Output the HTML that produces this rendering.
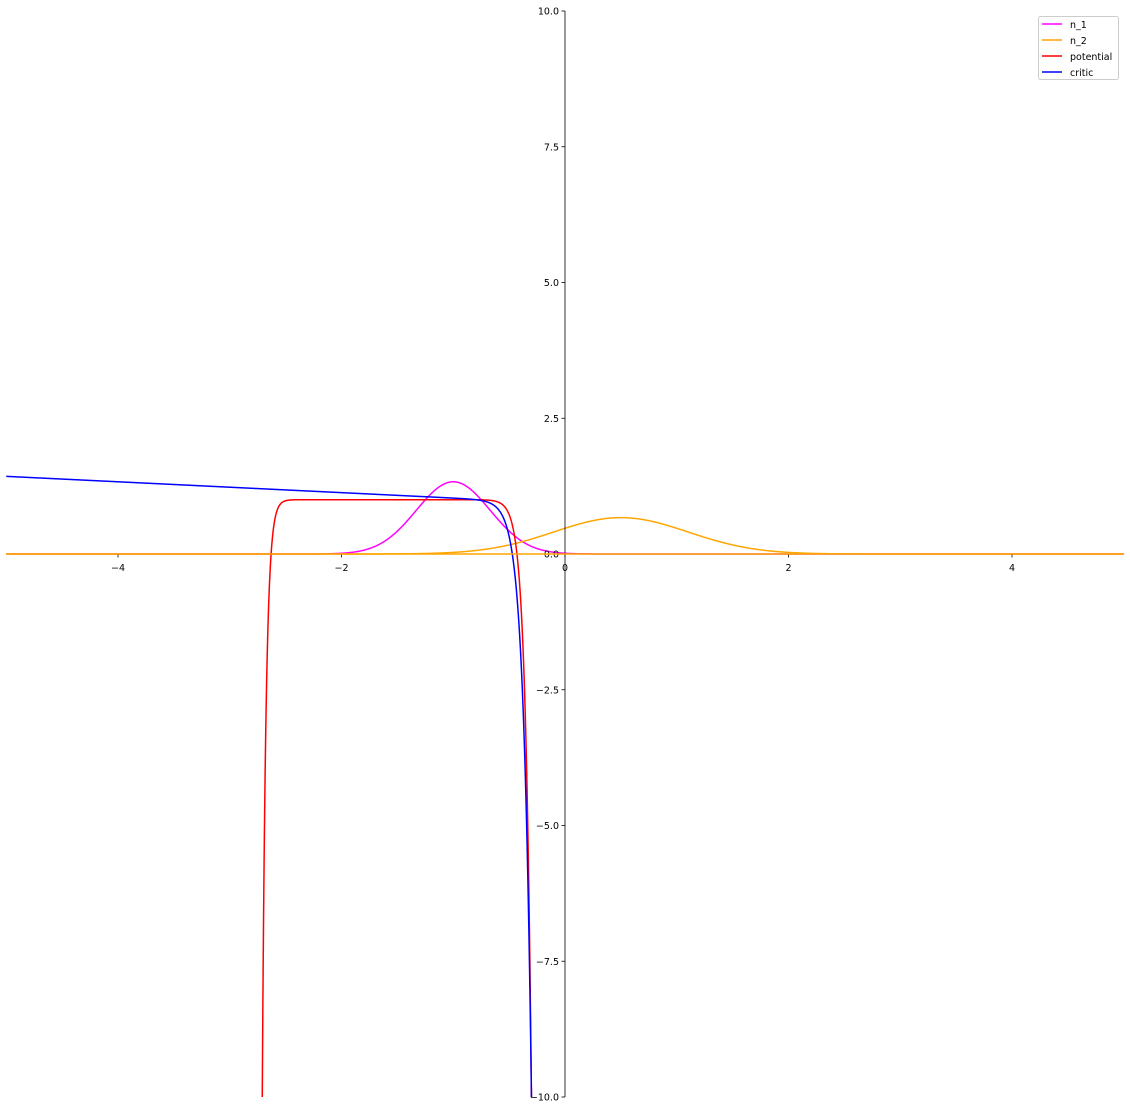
<!DOCTYPE html>
<html><head><meta charset="utf-8">
<style>
html,body{margin:0;padding:0;background:#fff;}
svg{display:block;}
text{font-family:"DejaVu Sans","Liberation Sans",sans-serif;font-size:9.5px;fill:#000;}
</style></head>
<body>
<svg id="s" width="1130" height="1111" viewBox="0 0 1130 1111" xmlns="http://www.w3.org/2000/svg">
<defs><clipPath id="cp"><rect x="6" y="11" width="1118" height="1086"/></clipPath></defs>
<g id="curves" fill="none" stroke-width="1.5" clip-path="url(#cp)"></g>
<line x1="6" y1="554" x2="1124" y2="554" stroke="#000" stroke-width="0.8"/>
<line x1="565" y1="11" x2="565" y2="1097" stroke="#000" stroke-width="0.8"/>
<g id="ticks" stroke="#000" stroke-width="0.8"></g>
<g id="labels"></g>
<path d="M6 554 L1124 554" stroke="#ffa500" stroke-width="1.5" fill="none"/>
<g>
<rect x="1038.5" y="16.5" width="80" height="63" rx="2" fill="#fff" fill-opacity="0.8" stroke="#ccc"/>
<line x1="1042" y1="24" x2="1062" y2="24" stroke="#ff00ff" stroke-width="1.5"/>
<line x1="1042" y1="40" x2="1062" y2="40" stroke="#ffa500" stroke-width="1.5"/>
<line x1="1042" y1="56" x2="1062" y2="56" stroke="#ff0000" stroke-width="1.5"/>
<line x1="1042" y1="72" x2="1062" y2="72" stroke="#0000ff" stroke-width="1.5"/>
<text x="1070" y="28">n_1</text>
<text x="1070" y="44">n_2</text>
<text x="1070" y="60">potential</text>
<text x="1070" y="76">critic</text>
</g>
</svg>
<script>
var NS="http://www.w3.org/2000/svg";
function X(x){return 565+x*111.75;}
function Y(y){return 554-y*54.3;}
function path(f,color,x0,x1){
  var d="",n=4000;
  for(var i=0;i<=n;i++){
    var x=x0+(x1-x0)*i/n, y=f(x);
    if(y<-10.5){ if(d && d.slice(-1)!="X"){ d+="L"+X(x).toFixed(2)+" "+Y(-10.5).toFixed(2)+"X";} continue;}
    d=d.replace(/X$/,"");
    d+=(d?"L":"M")+X(x).toFixed(2)+" "+Y(y).toFixed(2);
  }
  d=d.replace(/X/g,"");
  var p=document.createElementNS(NS,"path");
  p.setAttribute("d",d);p.setAttribute("stroke",color);
  document.getElementById("curves").appendChild(p);
}
function n1(x){return 1.33*Math.exp(-Math.pow(x+1,2)/(2*0.33*0.33));}
function n2(x){return 0.67*Math.exp(-Math.pow(x-0.5,2)/(2*0.6*0.6));}
function pot(x){return 1-Math.exp((x+0.43)/0.054)-Math.exp(-(x+2.63)/0.033);}
function cri(x){return 1-0.1*(x+0.7)-Math.exp((x+0.47)/0.071);}
path(n1,"#ff00ff",-5,5);
path(n2,"#ffa500",-5,5);
path(pot,"#ff0000",-2.72,-0.29);
path(cri,"#0000ff",-5,-0.29);
var t=document.getElementById("ticks"),L=document.getElementById("labels");
function ln(a,b,c,d){var l=document.createElementNS(NS,"line");l.setAttribute("x1",a);l.setAttribute("y1",b);l.setAttribute("x2",c);l.setAttribute("y2",d);t.appendChild(l);}
function tx(x,y,s,anc){var e=document.createElementNS(NS,"text");e.setAttribute("x",x);e.setAttribute("y",y);e.setAttribute("text-anchor",anc);e.textContent=s;L.appendChild(e);}
[-4,-2,0,2,4].forEach(function(v){var x=X(v);ln(x,554,x,557.5);tx(x,571,(v<0?"\u2212":"")+Math.abs(v),"middle");});
[-10,-7.5,-5,-2.5,0,2.5,5,7.5,10].forEach(function(v){var y=Y(v);ln(561.5,y,565,y);tx(559,y+3.5,(v<0?"\u2212":"")+Math.abs(v).toFixed(1),"end");});
</script>
</body></html>
